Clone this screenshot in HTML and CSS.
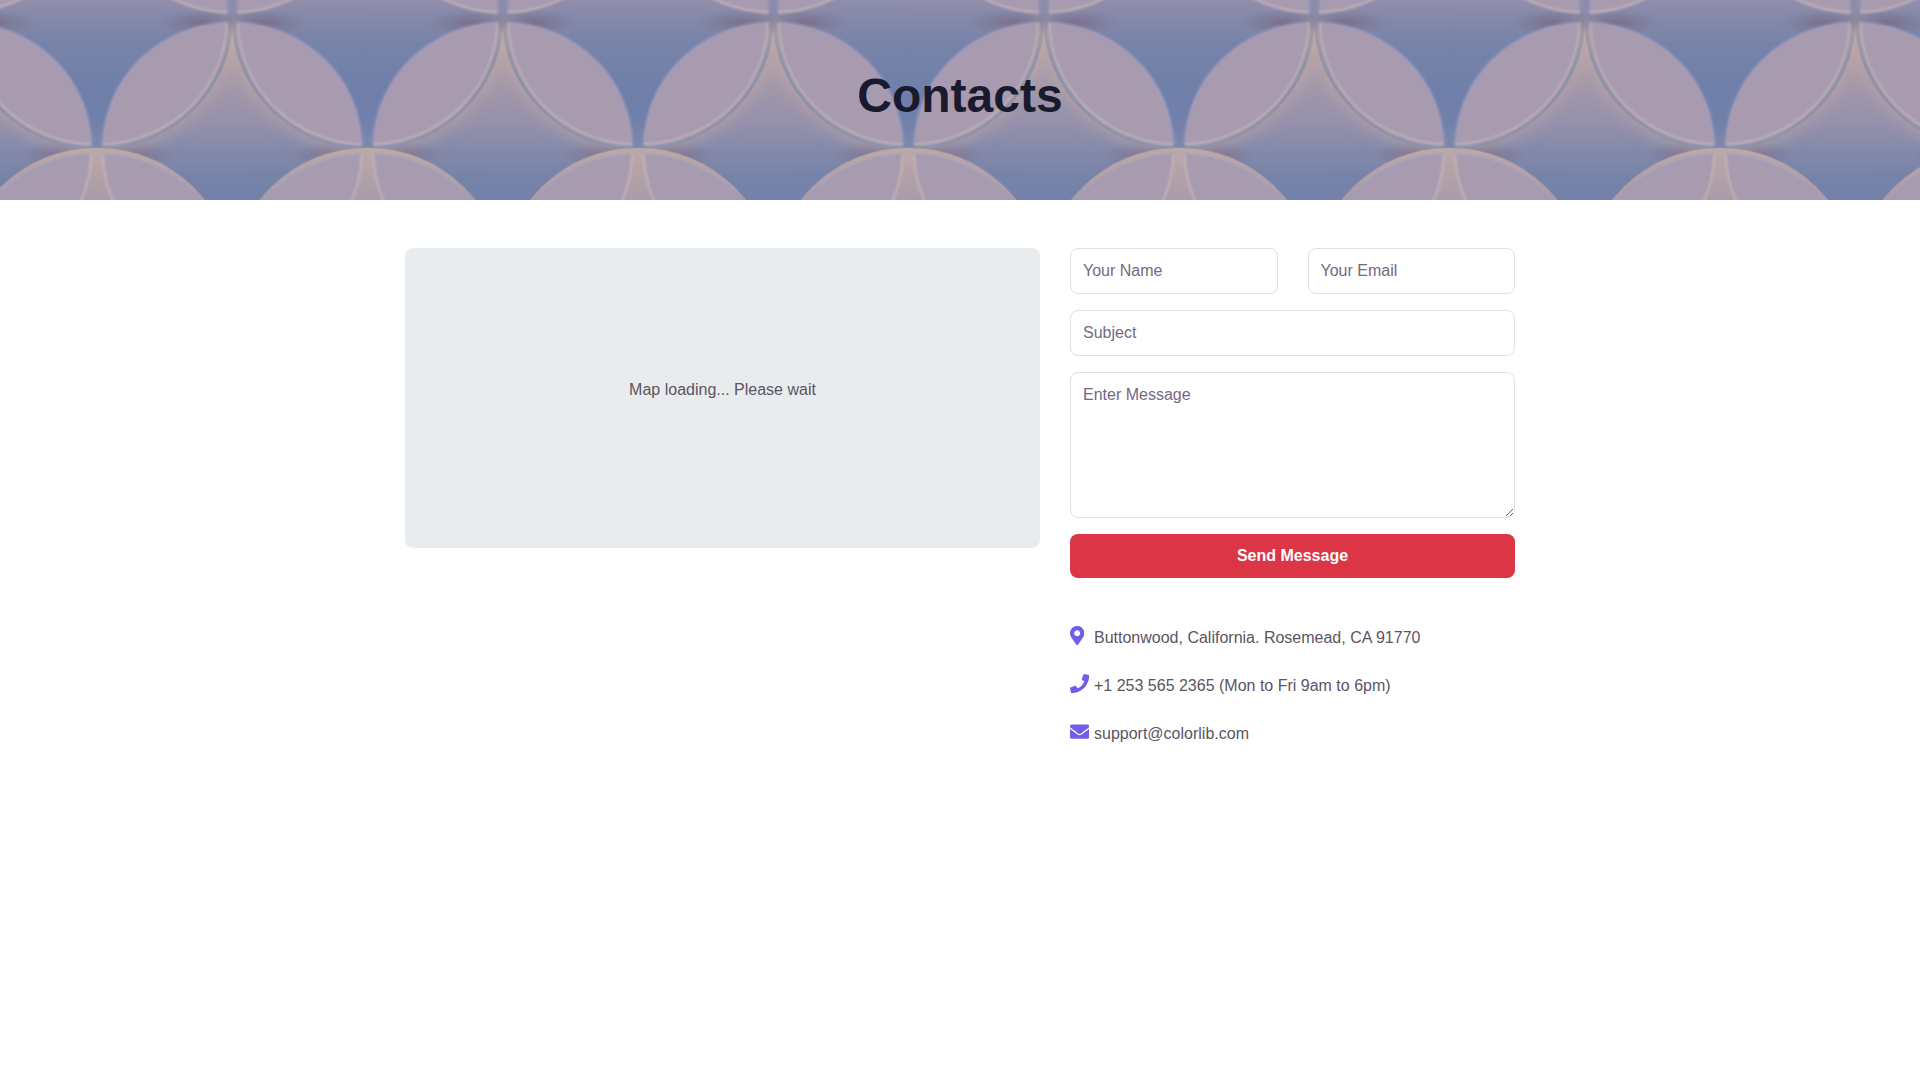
FILE: index.html
```html
<!DOCTYPE html>
<html lang="en">
<head>
<meta charset="utf-8">
<title>Contacts</title>
<link rel="stylesheet" href="styles.css">
</head>
<body>
<header class="hero">
  <svg class="hero-art" width="1920" height="200" viewBox="0 0 1920 200" aria-hidden="true">
    <defs>
      <linearGradient id="dg" x1="0" y1="0" x2="0" y2="1">
        <stop offset="0" stop-color="#bba8a8"/>
        <stop offset="0.2" stop-color="#aa9ba9"/>
        <stop offset="0.4" stop-color="#9590ab"/>
        <stop offset="0.6" stop-color="#7683a9"/>
        <stop offset="0.8" stop-color="#6f7fa9"/>
        <stop offset="1" stop-color="#7483ac"/>
      </linearGradient>
      <radialGradient id="shade">
        <stop offset="0" stop-color="#7a6f8c" stop-opacity="0.95"/>
        <stop offset="1" stop-color="#7a6f8c" stop-opacity="0"/>
      </radialGradient>
      <filter id="soft" x="-30%" y="-30%" width="160%" height="160%"><feGaussianBlur stdDeviation="8"/></filter>
      <filter id="edge" x="-10%" y="-10%" width="120%" height="120%"><feGaussianBlur stdDeviation="1"/></filter>
      <g id="cell">
        <ellipse cx="0" cy="0" rx="136" ry="133" fill="url(#dg)"/>
        <ellipse cx="-105" cy="6" rx="46" ry="13" fill="url(#shade)"/>
        <ellipse cx="105" cy="6" rx="46" ry="13" fill="url(#shade)"/>
      </g>
      <pattern id="tiles" patternUnits="userSpaceOnUse" width="270.5" height="264" patternTransform="translate(97 16.7)">
        <use href="#cell" x="135.25" y="132"/>
        <use href="#cell" x="0" y="0"/>
        <use href="#cell" x="270.5" y="0"/>
        <use href="#cell" x="0" y="264"/>
        <use href="#cell" x="270.5" y="264"/>
        <g fill="none" stroke="#c4aca4" stroke-width="13" filter="url(#soft)" opacity="0.6">
          <path d="M6 128A129 124 0 0 0 130 6"/>
          <path d="M264.5 128A129 124 0 0 1 140.5 6"/>
          <path d="M6 128A129 124 0 0 0 130 6" transform="translate(0 264)"/>
          <path d="M264.5 128A129 124 0 0 1 140.5 6" transform="translate(0 264)"/>
        </g>
        <g fill="#a89bb0">
          <path d="M6 128A129 124 0 0 1 130 6A129 124 0 0 1 6 128Z"/>
          <path d="M264.5 128A129 124 0 0 0 140.5 6A129 124 0 0 0 264.5 128Z"/>
          <path d="M6 138A129 124 0 0 1 130 260A129 124 0 0 1 6 138Z"/>
          <path d="M264.5 138A129 124 0 0 0 140.5 260A129 124 0 0 0 264.5 138Z"/>
        </g>
        <g fill="none" stroke="#9e9bbb" stroke-width="2" filter="url(#edge)">
          <path d="M6 128A129 124 0 0 1 130 6"/>
          <path d="M264.5 128A129 124 0 0 0 140.5 6"/>
          <path d="M6 138A129 124 0 0 1 130 260"/>
          <path d="M264.5 138A129 124 0 0 0 140.5 260"/>
        </g>
        <g fill="none" stroke="#cdb9b9" stroke-width="1.8" filter="url(#edge)" opacity="0.85">
          <path d="M130 6A129 124 0 0 1 6 128"/>
          <path d="M140.5 6A129 124 0 0 0 264.5 128"/>
          <path d="M130 260A129 124 0 0 1 6 138"/>
          <path d="M140.5 260A129 124 0 0 0 264.5 138"/>
        </g>
      </pattern>
    </defs>
    <rect width="1920" height="200" fill="url(#tiles)"/>
  </svg>
  <h1 class="hero-title">Contacts</h1>
</header>

<main class="layout">
  <section class="map-panel"><p class="map-text">Map loading... Please wait</p></section>
  <section class="side">
    <form class="contact-form">
      <div class="form-row">
        <input class="field" type="text" placeholder="Your Name">
        <input class="field" type="email" placeholder="Your Email">
      </div>
      <input class="field" type="text" placeholder="Subject">
      <textarea class="field field-area" placeholder="Enter Message"></textarea>
      <button class="send" type="button">Send Message</button>
    </form>
    <ul class="info">
      <li class="info-row">
        <span class="info-icon"><svg width="14.4" height="19.2" viewBox="0 0 384 512"><path fill="currentColor" d="M172.268 501.67C26.97 291.031 0 262.413 0 192 0 85.961 85.961 0 192 0s192 85.961 192 192c0 70.413-26.97 99.031-172.268 309.67-9.535 13.774-29.93 13.773-39.464 0zM192 272c44.183 0 80-35.817 80-80s-35.817-80-80-80-80 35.817-80 80 35.817 80 80 80z"/></svg></span>
        <span>Buttonwood, California. Rosemead, CA 91770</span>
      </li>
      <li class="info-row">
        <span class="info-icon"><svg width="19.2" height="19.2" viewBox="0 0 512 512"><path fill="currentColor" d="M493.4 24.6l-104-24c-11.3-2.6-22.9 3.3-27.5 13.9l-48 112c-4.2 9.8-1.4 21.3 6.9 28l60.6 49.6c-36 76.7-98.9 140.5-177.2 177.2l-49.6-60.6c-6.8-8.3-18.2-11.1-28-6.9l-112 48C3.9 366.5-2 378.1.6 389.4l24 104C27.1 504.2 36.7 512 48 512c256.1 0 464-207.5 464-464 0-11.2-7.7-20.9-18.6-23.4z"/></svg></span>
        <span>+1 253 565 2365 (Mon to Fri 9am to 6pm)</span>
      </li>
      <li class="info-row">
        <span class="info-icon"><svg width="19.2" height="19.2" viewBox="0 0 512 512"><path fill="currentColor" d="M502.3 190.8c3.9-3.1 9.7-.2 9.7 4.7V400c0 26.5-21.5 48-48 48H48c-26.5 0-48-21.5-48-48V195.6c0-5 5.7-7.8 9.7-4.7 22.4 17.4 52.1 39.5 154.1 113.6 21.1 15.4 56.7 47.8 92.2 47.6 35.7.3 72-32.8 92.3-47.6 102-74.1 131.6-96.3 154-113.7zM256 320c23.2.4 56.6-29.2 73.4-41.4 132.7-96.3 142.8-104.7 173.4-128.7 5.8-4.5 9.2-11.5 9.2-18.9v-19c0-26.5-21.5-48-48-48H48C21.5 64 0 85.5 0 112v19c0 7.4 3.4 14.3 9.2 18.9 30.6 23.9 40.7 32.4 173.4 128.7 16.8 12.2 50.2 41.8 73.4 41.4z"/></svg></span>
        <span>support@colorlib.com</span>
      </li>
    </ul>
  </section>
</main>
</body>
</html>
```

FILE: styles.css
```css
* { box-sizing: border-box; }
html, body { margin: 0; padding: 0; background: #fff; }
body {
  font-family: "Liberation Sans", Arial, sans-serif;
  font-size: 16px;
  line-height: 1.5;
  color: #5b5562;
  overflow-x: hidden;
}
.hero {
  display: grid;
  height: 200px;
  overflow: hidden;
  align-items: center;
  justify-items: center;
}
.hero-art {
  grid-area: 1 / 1;
  display: block;
}
.hero-title {
  grid-area: 1 / 1;
  margin: 0 0 8px;
  font-size: 48px;
  font-weight: 700;
  line-height: 1.2;
  color: #1a1a2e;
}
.layout {
  width: 1110px;
  margin: 48px auto 0;
  display: grid;
  grid-template-columns: 635px 445px;
  column-gap: 30px;
  align-items: start;
}
.map-panel {
  height: 300px;
  background: #e9ecef;
  border-radius: 8px;
  display: flex;
  align-items: center;
  justify-content: center;
}
.map-text { margin: 0 0 16px; }
.contact-form {
  display: flex;
  flex-direction: column;
  gap: 16px;
}
.form-row {
  display: grid;
  grid-template-columns: 1fr 1fr;
  column-gap: 30px;
}
.field {
  display: block;
  width: 100%;
  height: 46px;
  padding: 10px 12px;
  border: 1px solid #e0dee2;
  border-radius: 8px;
  background: #fff;
  font: 16px/1.5 "Liberation Sans", Arial, sans-serif;
  color: #5b5562;
  outline: none;
}
.field::placeholder { color: #74697f; opacity: 1; }
.field-area {
  height: 146px;
  resize: vertical;
}
.send {
  height: 44px;
  border: 0;
  border-radius: 8px;
  background: #dc3545;
  color: #fff;
  font: 700 16px/1.5 "Liberation Sans", Arial, sans-serif;
}
.info {
  list-style: none;
  margin: 48px 0 0;
  padding: 0;
  display: flex;
  flex-direction: column;
  gap: 24px;
}
.info-row {
  display: flex;
  align-items: center;
  height: 24px;
}
.info-icon {
  display: flex;
  width: 24px;
  flex: none;
  color: #6f5fe8;
  margin-top: -4px;
}
.info-icon svg { display: block; }
```
